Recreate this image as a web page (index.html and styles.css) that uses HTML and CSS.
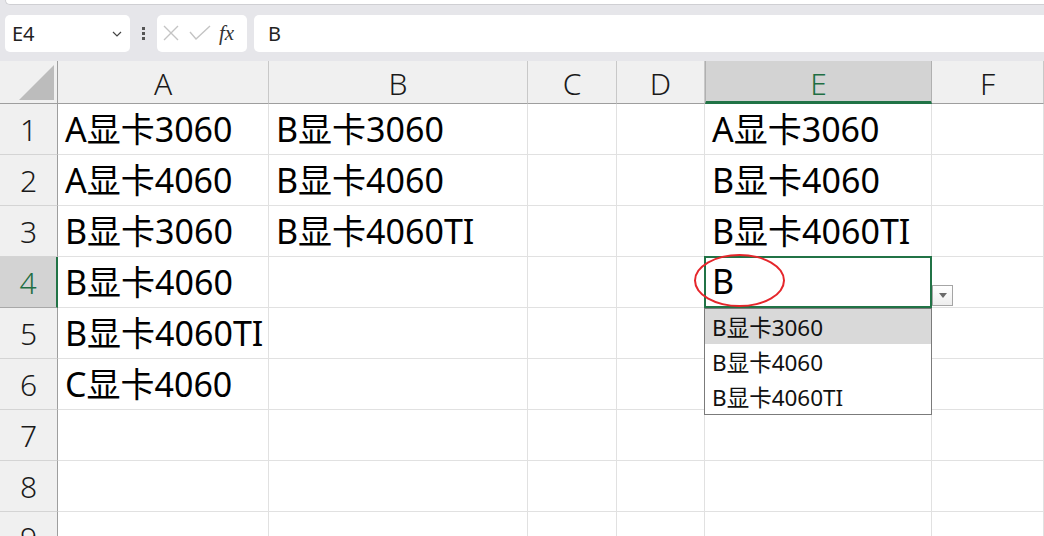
FILE: index.html
```html
<!DOCTYPE html>
<html lang="zh-CN">
<head>
    <meta charset="UTF-8">
    <title>Excel - 下拉列表</title>
    <link rel="stylesheet" href="styles.css">
</head>
<body>
    <div class="top-strip"></div>

    <div class="toolbar">
        <div class="name-box">
            <span>E4</span>
            <svg class="chevron" width="10" height="6" viewBox="0 0 10 6"><path d="M1 1 L5 5 L9 1" fill="none" stroke="#444" stroke-width="1.2"/></svg>
        </div>
        <div class="grip"><i></i><i></i><i></i></div>
        <div class="fx-box">
            <svg width="16" height="16" viewBox="0 0 16 16"><path d="M1 1 L15 15 M15 1 L1 15" stroke="#c4c4c4" stroke-width="1.4" fill="none"/></svg>
            <svg width="22" height="16" viewBox="0 0 22 16"><path d="M1 7 L7 14 L21 1" stroke="#c4c4c4" stroke-width="1.4" fill="none"/></svg>
            <span class="fx">fx</span>
        </div>
        <div class="formula">B</div>
    </div>

    <div class="sheet">
        <div class="corner"><div class="tri"></div></div>
        <div class="col-head">A</div>
        <div class="col-head">B</div>
        <div class="col-head">C</div>
        <div class="col-head">D</div>
        <div class="col-head active">E</div>
        <div class="col-head">F</div>

        <div class="row-head">1</div>
        <div class="cell">A显卡3060</div>
        <div class="cell">B显卡3060</div>
        <div class="cell"></div>
        <div class="cell"></div>
        <div class="cell">A显卡3060</div>
        <div class="cell"></div>

        <div class="row-head">2</div>
        <div class="cell">A显卡4060</div>
        <div class="cell">B显卡4060</div>
        <div class="cell"></div>
        <div class="cell"></div>
        <div class="cell">B显卡4060</div>
        <div class="cell"></div>

        <div class="row-head">3</div>
        <div class="cell">B显卡3060</div>
        <div class="cell">B显卡4060TI</div>
        <div class="cell"></div>
        <div class="cell"></div>
        <div class="cell">B显卡4060TI</div>
        <div class="cell"></div>

        <div class="row-head active">4</div>
        <div class="cell">B显卡4060</div>
        <div class="cell"></div>
        <div class="cell"></div>
        <div class="cell"></div>
        <div class="cell selected">
            B
            <div class="circle"></div>
            <div class="drop-btn"><svg width="8" height="5" viewBox="0 0 8 5"><path d="M0 0 H8 L4 5 Z" fill="#6a6a6a"/></svg></div>
            <ul class="drop-list">
                <li class="hover">B显卡3060</li>
                <li>B显卡4060</li>
                <li>B显卡4060TI</li>
            </ul>
        </div>
        <div class="cell"></div>

        <div class="row-head">5</div>
        <div class="cell">B显卡4060TI</div>
        <div class="cell"></div>
        <div class="cell"></div>
        <div class="cell"></div>
        <div class="cell"></div>
        <div class="cell"></div>

        <div class="row-head">6</div>
        <div class="cell">C显卡4060</div>
        <div class="cell"></div>
        <div class="cell"></div>
        <div class="cell"></div>
        <div class="cell"></div>
        <div class="cell"></div>

        <div class="row-head">7</div>
        <div class="cell"></div>
        <div class="cell"></div>
        <div class="cell"></div>
        <div class="cell"></div>
        <div class="cell"></div>
        <div class="cell"></div>

        <div class="row-head">8</div>
        <div class="cell"></div>
        <div class="cell"></div>
        <div class="cell"></div>
        <div class="cell"></div>
        <div class="cell"></div>
        <div class="cell"></div>

        <div class="row-head">9</div>
        <div class="cell"></div>
        <div class="cell"></div>
        <div class="cell"></div>
        <div class="cell"></div>
        <div class="cell"></div>
        <div class="cell"></div>
    </div>
</body>
</html>
```

FILE: styles.css
```css
* {
    box-sizing: border-box;
}

body {
    margin: 0;
    background: #e6e6ea;
    font-family: "Noto Sans", "Noto Sans CJK SC", sans-serif;
    color: #111;
    overflow: hidden;
}

.top-strip {
    height: 5px;
    margin-left: 5px;
    background: #fff;
    border-bottom: 1px solid #cfcfd3;
    border-left: 1px solid #cfcfd3;
    border-bottom-left-radius: 6px;
}

.toolbar {
    display: flex;
    align-items: center;
    height: 56px;
    padding: 0 0 0 5px;
}

.name-box {
    width: 125px;
    height: 37px;
    background: #fff;
    border-radius: 5px;
    display: flex;
    align-items: center;
    justify-content: space-between;
    padding: 0 8px 0 7px;
    font-size: 20px;
    color: #222;
}

.chevron {
    margin-top: 2px;
}

.grip {
    width: 27px;
    display: flex;
    flex-direction: column;
    align-items: center;
    gap: 2px;
}

.grip i {
    width: 3px;
    height: 3px;
    background: #555;
}

.fx-box {
    width: 90px;
    height: 37px;
    background: #fff;
    border-radius: 5px;
    display: flex;
    align-items: center;
    gap: 10px;
    padding-left: 6px;
}

.fx {
    font-family: "Liberation Serif", serif;
    font-style: italic;
    font-size: 21px;
    color: #333;
    margin-left: -2px;
}

.formula {
    flex: 1;
    height: 37px;
    margin-left: 7px;
    background: #fff;
    border-radius: 5px 0 0 5px;
    display: flex;
    align-items: center;
    padding-left: 14px;
    font-size: 20px;
    color: #222;
}

.sheet {
    display: grid;
    grid-template-columns: 58px 211px 259px 89px 88px 227px 1fr;
    grid-template-rows: 43px repeat(9, 51px);
    background: #fff;
}

.corner {
    background: #f0f0f0;
    border-right: 1px solid #9e9e9e;
    border-bottom: 1px solid #9e9e9e;
    position: relative;
}

.tri {
    position: absolute;
    right: 3px;
    bottom: 3px;
    width: 0;
    height: 0;
    border-left: 35px solid transparent;
    border-bottom: 35px solid #bcbcbc;
}

.col-head {
    background: #f0f0f0;
    border-right: 1px solid #c8c8c8;
    border-bottom: 1px solid #9e9e9e;
    display: flex;
    align-items: center;
    justify-content: center;
    font-size: 30px;
    font-weight: 300;
    color: #1a1a1a;
    padding-top: 2px;
}

.col-head.active {
    background: #d3d3d3;
    color: #1f6e43;
    border-bottom: 3px solid #217346;
    border-left: 1px solid #b0b0b0;
    border-right: 1px solid #b0b0b0;
    padding-top: 4px;
}

.row-head {
    background: #f0f0f0;
    border-right: 1px solid #9e9e9e;
    border-bottom: 1px solid #d4d4d4;
    display: flex;
    align-items: center;
    justify-content: center;
    font-size: 30px;
    font-weight: 300;
    color: #1a1a1a;
}

.row-head.active {
    background: #d3d3d3;
    color: #1f6e43;
    border-right: 2px solid #217346;
    border-bottom: 1px solid #a8a8a8;
}

.cell {
    border-right: 1px solid #e1e1e1;
    border-bottom: 1px solid #e1e1e1;
    display: flex;
    align-items: center;
    padding: 0 0 3px 7px;
    font-size: 34px;
    white-space: nowrap;
    color: #000;
}

.cell.selected {
    position: relative;
    border: 2px solid #217346;
    padding-left: 6px;
    margin: -1px 0 0 -1px;
}

.circle {
    position: absolute;
    left: -12px;
    top: -4px;
    width: 91px;
    height: 53px;
    border: 2.5px solid #e5262b;
    border-radius: 50%;
}

.drop-btn {
    position: absolute;
    left: 226px;
    top: 27px;
    width: 21px;
    height: 21px;
    border: 1px solid #a5a5a5;
    background: linear-gradient(#ffffff, #eeeeee);
    display: flex;
    align-items: center;
    justify-content: center;
}

.drop-list {
    position: absolute;
    left: -2px;
    top: 50px;
    width: 228px;
    margin: 0;
    padding: 0;
    list-style: none;
    background: #fff;
    border: 1px solid #7b7b7b;
    font-size: 22.5px;
    z-index: 2;
}

.drop-list li {
    height: 35px;
    display: flex;
    align-items: center;
    padding-left: 7px;
    color: #111;
}

.drop-list li.hover {
    background: #d9d9d9;
}
```
